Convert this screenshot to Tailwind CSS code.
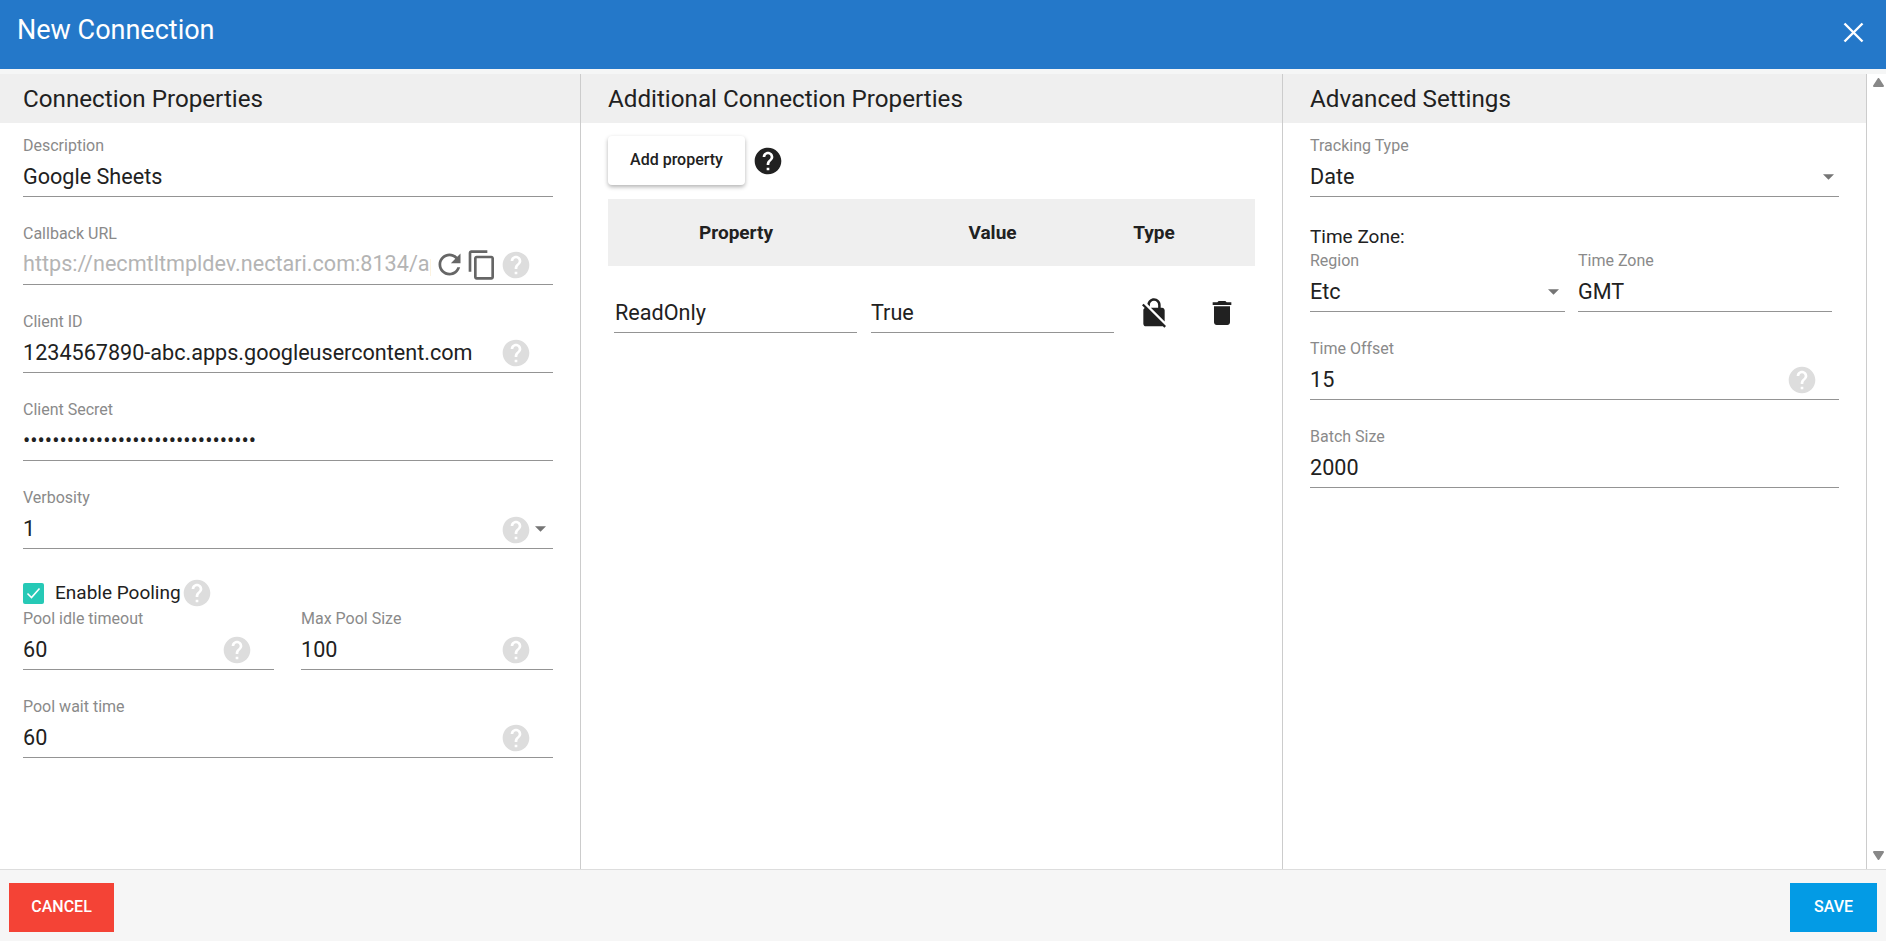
<!DOCTYPE html>
<html lang="en">
<head>
    <meta charset="UTF-8">
    <title>New Connection</title>
    <script src="https://cdn.jsdelivr.net/npm/@tailwindcss/browser@4"></script>
</head>
<body class="h-screen w-screen overflow-hidden flex flex-col bg-white text-[#212121] font-['Roboto',sans-serif]">
    <!-- icon sprite -->
    <svg class="hidden">
        <symbol id="help" viewBox="0 0 24 24"><path d="M12 2C6.48 2 2 6.48 2 12s4.48 10 10 10 10-4.48 10-10S17.52 2 12 2zm1 17h-2v-2h2v2zm2.07-7.75l-.9.92C13.45 12.9 13 13.5 13 15h-2v-.5c0-1.1.45-2.1 1.17-2.83l1.24-1.26c.37-.36.59-.86.59-1.41 0-1.1-.9-2-2-2s-2 .9-2 2H8c0-2.21 1.79-4 4-4s4 1.79 4 4c0 .88-.36 1.68-.93 2.25z"/></symbol>
        <symbol id="drop" viewBox="0 0 12 6"><path d="M0 0h12L6 6z"/></symbol>
        <symbol id="scroll" viewBox="0 0 11 9"><path d="M1 1h9L5.5 8z" stroke-width="2" stroke-linejoin="round"/></symbol>
    </svg>

    <header class="h-[69px] shrink-0 bg-[#2478c9] flex justify-between text-white">
        <h1 class="pl-[17px] pt-[14px] text-[27px] leading-[32px]">New Connection</h1>
        <button class="pr-[22px] pt-[22px] h-fit">
            <svg class="w-[21px] h-[21px]" viewBox="0 0 21 21" fill="none" stroke="white" stroke-width="2.4"><path d="M1.5 1.5l18 18M19.5 1.5l-18 18"/></svg>
        </button>
    </header>

    <main class="flex-1 min-h-0 flex pt-[5px] bg-[#f5f6f6]">
        <!-- Connection Properties -->
        <section class="w-[581px] shrink-0 bg-white border-r border-[#ccc]">
            <h2 class="h-[49px] pt-[1px] bg-[#efefef] pl-[23px] flex items-center text-[24.2px]">Connection Properties</h2>
            <div class="pl-[23px] pr-[27px] flex flex-col gap-[14px]">
                <div class="pt-[12px]">
                    <label class="block text-[16px] leading-[22px] text-[#8a8a8a]">Description</label>
                    <div class="h-[40px] pt-[1px] flex items-center border-b border-[#949494] text-[21.6px]">Google Sheets</div>
                </div>
                <div class="pt-[12px]">
                    <label class="block text-[16px] leading-[22px] text-[#8a8a8a]">Callback URL</label>
                    <div class="h-[40px] flex items-center border-b border-[#949494] text-[21.6px]">
                        <input class="w-[408px] mr-[2px] outline-none text-[#b4b4b4]" value="https://necmtltmpldev.nectari.com:8134/api/oauth/callback" readonly>
                        <svg class="w-[33px] h-[33px] shrink-0 fill-[#666]" viewBox="0 0 24 24"><path d="M17.65 6.35C16.2 4.9 14.21 4 12 4c-4.42 0-7.99 3.58-7.99 8s3.57 8 7.99 8c3.73 0 6.84-2.55 7.73-6h-2.08c-.82 2.33-3.04 4-5.65 4-3.31 0-6-2.69-6-6s2.69-6 6-6c1.66 0 3.14.69 4.22 1.78L13 11h7V4l-2.35 2.35z"/></svg>
                        <svg class="w-[32px] h-[32px] shrink-0 fill-[#666]" viewBox="0 0 24 24"><path d="M16 1H4c-1.1 0-2 .9-2 2v14h2V3h12V1zm3 4H8c-1.1 0-2 .9-2 2v14c0 1.1.9 2 2 2h11c1.1 0 2-.9 2-2V7c0-1.1-.9-2-2-2zm0 16H8V7h11v14z"/></svg>
                        <svg class="w-[32px] h-[32px] ml-[2px] shrink-0 fill-[#ddd]"><use href="#help"/></svg>
                    </div>
                </div>
                <div class="pt-[12px]">
                    <label class="block text-[16px] leading-[22px] text-[#8a8a8a]">Client ID</label>
                    <div class="h-[40px] pt-[1px] pr-[21px] flex items-center justify-between border-b border-[#949494] text-[21.6px]">
                        <span>1234567890-abc.apps.googleusercontent.com</span>
                        <svg class="w-[32px] h-[32px] shrink-0 fill-[#ddd]"><use href="#help"/></svg>
                    </div>
                </div>
                <div class="pt-[12px]">
                    <label class="block text-[16px] leading-[22px] text-[#8a8a8a]">Client Secret</label>
                    <div class="h-[40px] pt-[1px] flex items-center border-b border-[#949494] text-[21.6px]">••••••••••••••••••••••••••••••••</div>
                </div>
                <div class="pt-[12px]">
                    <label class="block text-[16px] leading-[22px] text-[#8a8a8a]">Verbosity</label>
                    <div class="h-[40px] pt-[1px] pr-[7px] flex items-center border-b border-[#949494] text-[21.6px]">
                        <span class="flex-1">1</span>
                        <svg class="w-[32px] h-[32px] mt-[2px] shrink-0 fill-[#ddd]"><use href="#help"/></svg>
                        <svg class="w-[11px] h-[6px] ml-[3px] fill-[#757575]"><use href="#drop"/></svg>
                    </div>
                </div>
            </div>
            <div class="pl-[23px] pr-[27px] mt-[30px] pt-[1px] h-[27px] flex items-center text-[19px]">
                <span class="w-[21px] h-[21px] rounded-[2px] bg-[#26c9b6] flex items-center justify-center">
                    <svg class="w-[15px] h-[12px]" viewBox="0 0 15 12" fill="none" stroke="white" stroke-width="1.6"><path d="M1.5 6.5l4 4 8-9"/></svg>
                </span>
                <span class="ml-[11px]">Enable Pooling</span>
                <svg class="w-[32px] h-[32px] shrink-0 fill-[#ddd]"><use href="#help"/></svg>
            </div>
            <div class="pl-[23px] pr-[27px] pt-[2px] flex gap-[27px]">
                <div class="w-[251px]">
                    <label class="block text-[16px] leading-[22px] text-[#8a8a8a]">Pool idle timeout</label>
                    <div class="h-[40px] pt-[1px] pr-[21px] flex items-center justify-between border-b border-[#949494] text-[21.6px]">
                        <span>60</span>
                        <svg class="w-[32px] h-[32px] shrink-0 fill-[#ddd]"><use href="#help"/></svg>
                    </div>
                </div>
                <div class="w-[252px]">
                    <label class="block text-[16px] leading-[22px] text-[#8a8a8a]">Max Pool Size</label>
                    <div class="h-[40px] pt-[1px] pr-[21px] flex items-center justify-between border-b border-[#949494] text-[21.6px]">
                        <span>100</span>
                        <svg class="w-[32px] h-[32px] shrink-0 fill-[#ddd]"><use href="#help"/></svg>
                    </div>
                </div>
            </div>
            <div class="pl-[23px] pr-[27px] mt-[14px] pt-[12px]">
                <label class="block text-[16px] leading-[22px] text-[#8a8a8a]">Pool wait time</label>
                <div class="h-[40px] pt-[1px] pr-[21px] flex items-center justify-between border-b border-[#949494] text-[21.6px]">
                    <span>60</span>
                    <svg class="w-[32px] h-[32px] shrink-0 fill-[#ddd]"><use href="#help"/></svg>
                </div>
            </div>
        </section>

        <!-- Additional Connection Properties -->
        <section class="w-[702px] shrink-0 bg-white border-r border-[#ccc]">
            <h2 class="h-[49px] pt-[1px] bg-[#efefef] pl-[27px] flex items-center text-[24.2px]">Additional Connection Properties</h2>
            <div class="pl-[27px] pr-[27px]">
                <div class="mt-[13px] flex items-center">
                    <button class="w-[137px] h-[49px] pb-[2px] rounded-[4px] bg-white text-[16px] font-medium shadow-[0_2px_4px_rgba(0,0,0,0.3)]">Add property</button>
                    <svg class="w-[32px] h-[32px] ml-[7px] fill-[#212121]"><use href="#help"/></svg>
                </div>
                <div class="mt-[14px] h-[67px] pt-[1px] bg-[#efefef] text-[19px] font-bold grid grid-cols-[256px_257px_66px] items-center text-center">
                    <span>Property</span>
                    <span>Value</span>
                    <span>Type</span>
                </div>
                <div class="mt-[27px] flex items-start">
                    <div class="ml-[6px] w-[243px] h-[40px] pl-[1px] pt-[1px] flex items-center border-b border-[#949494] text-[21.6px]">ReadOnly</div>
                    <div class="ml-[14px] w-[243px] h-[40px] pt-[1px] flex items-center border-b border-[#949494] text-[21.6px]">True</div>
                    <svg class="w-[32px] h-[32px] ml-[24px] mt-[4px] fill-[#212121]" viewBox="0 0 24 24"><path d="M21 21.78L4.22 5 3 6.22l2.04 2.04C4.42 8.6 4 9.25 4 10v10c0 1.1.9 2 2 2h12c.23 0 .45-.05.66-.12L19.78 23 21 21.78zM8.9 6c0-1.71 1.39-3.1 3.1-3.1s3.1 1.39 3.1 3.1v2H9.66L20 18.34V10c0-1.1-.9-2-2-2h-1V6c0-2.76-2.24-5-5-5-2.52 0-4.6 1.87-4.94 4.29L8.9 7.13V6z"/></svg>
                    <svg class="w-[32px] h-[32px] ml-[36px] mt-[4px] fill-[#212121]" viewBox="0 0 24 24"><path d="M6 19c0 1.1.9 2 2 2h8c1.1 0 2-.9 2-2V7H6v12zM19 4h-3.5l-1-1h-5l-1 1H5v2h14V4z"/></svg>
                </div>
            </div>
        </section>

        <!-- Advanced Settings -->
        <section class="w-[584px] shrink-0 bg-white border-r border-[#ccc]">
            <h2 class="h-[49px] pt-[1px] bg-[#efefef] pl-[27px] flex items-center text-[24.2px]">Advanced Settings</h2>
            <div class="pl-[27px] pr-[27px]">
                <div class="pt-[12px]">
                    <label class="block text-[16px] leading-[22px] text-[#8a8a8a]">Tracking Type</label>
                    <div class="h-[40px] pt-[1px] pr-[5px] flex items-center justify-between border-b border-[#949494] text-[21.6px]">
                        <span>Date</span>
                        <svg class="w-[11px] h-[6px] fill-[#757575]"><use href="#drop"/></svg>
                    </div>
                </div>
                <div class="mt-[29px] text-[19px] leading-[22px]">Time Zone:</div>
                <div class="mt-[2px] flex">
                    <div class="w-[255px]">
                        <label class="block text-[16px] leading-[22px] text-[#8a8a8a]">Region</label>
                        <div class="h-[40px] pt-[1px] pr-[6px] flex items-center justify-between border-b border-[#949494] text-[21.6px]">
                            <span>Etc</span>
                            <svg class="w-[11px] h-[6px] fill-[#757575]"><use href="#drop"/></svg>
                        </div>
                    </div>
                    <div class="w-[254px] ml-[13px]">
                        <label class="block text-[16px] leading-[22px] text-[#8a8a8a]">Time Zone</label>
                        <div class="h-[40px] pt-[1px] flex items-center border-b border-[#949494] text-[21.6px]">GMT</div>
                    </div>
                </div>
                <div class="mt-[14px] pt-[12px]">
                    <label class="block text-[16px] leading-[22px] text-[#8a8a8a]">Time Offset</label>
                    <div class="h-[40px] pt-[1px] pr-[21px] flex items-center justify-between border-b border-[#949494] text-[21.6px]">
                        <span>15</span>
                        <svg class="w-[32px] h-[32px] shrink-0 fill-[#ddd]"><use href="#help"/></svg>
                    </div>
                </div>
                <div class="mt-[14px] pt-[12px]">
                    <label class="block text-[16px] leading-[22px] text-[#8a8a8a]">Batch Size</label>
                    <div class="h-[40px] pt-[1px] flex items-center border-b border-[#949494] text-[21.6px]">2000</div>
                </div>
            </div>
        </section>

        <!-- scrollbar -->
        <div class="flex-1 bg-white flex flex-col justify-between items-center pl-[3px] pt-[4px] pb-[9px]">
            <svg class="w-[11px] h-[9px] fill-[#888] stroke-[#888] rotate-180"><use href="#scroll"/></svg>
            <svg class="w-[11px] h-[9px] fill-[#888] stroke-[#888]"><use href="#scroll"/></svg>
        </div>
    </main>

    <footer class="h-[72px] shrink-0 bg-[#f6f6f6] border-t border-[#ddd] flex justify-between items-start pt-[13px] pl-[9px] pr-[9px]">
        <button class="w-[105px] h-[49px] pb-[2px] bg-[#f44336] text-white text-[16px] font-medium">CANCEL</button>
        <button class="w-[87px] h-[49px] pb-[2px] bg-[#039be5] text-white text-[16px] font-medium">SAVE</button>
    </footer>
</body>
</html>
